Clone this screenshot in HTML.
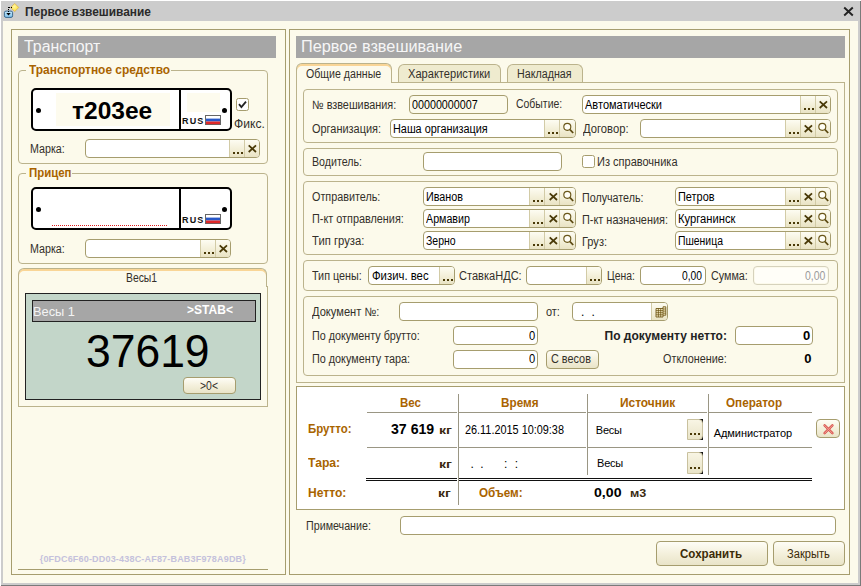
<!DOCTYPE html>
<html lang="ru"><head><meta charset="utf-8"><title>Первое взвешивание</title>
<style>
html,body{margin:0;padding:0}
body{width:861px;height:586px;background:#fff;position:relative;overflow:hidden;font-family:"Liberation Sans",sans-serif;font-size:12px}
div,span.t,span.fb,i.dots{position:absolute;box-sizing:border-box}
.t{white-space:nowrap;line-height:1;color:#2a2a2a;transform-origin:0 0}
.b{font-weight:bold}
.br{color:#a96300}
.br2{color:#a86400}
.gt{}
.lb{color:#33302a}
.in{color:#000}
.hd{font-size:16px;color:#f6f6f6}
.pnl{border:1px solid #a69d6e}
.grp{border:1px solid #bbb38c;border-radius:4px}
.fld{border:1px solid #a69d6e;border-radius:4px;background:#fff;overflow:hidden}
.fld.ro{background:#fcfaeb}
.fld.dis{background:#fffef8;border-color:#d6d2bc;box-shadow:inset 0 0 0 1px #fcfaeb}
.fb{top:0;bottom:0;width:16px;border-left:1px solid #d2cba6;background:linear-gradient(#fdfcf2,#f3efd8 55%,#e9e3c4)}
.ic{position:absolute;left:0.6px;top:0;width:15px;height:16px}
i.dots{left:3px;top:12px;width:10px;height:2.2px;background:linear-gradient(90deg,#4a3a08 0 2px,transparent 2px 4px,#4a3a08 4px 6px,transparent 6px 8px,#4a3a08 8px 10px)}
.btn{border:1px solid #a69d6e;border-radius:4px;background:linear-gradient(#fefdf6,#f4f0dc 50%,#e9e4c8)}
.cbtn{background:linear-gradient(90deg,transparent 12px,#111 12px)}
.cin{left:0;top:0;right:0;bottom:0;border:1px solid #c9c19e;border-radius:0 4px 4px 0;background:linear-gradient(#f8f5e4,#e9e4c8)}
.tab{border:1px solid #bbb38c;border-bottom:none;border-radius:6px 6px 0 0}
.tab.act{background:#fcfaeb;box-shadow:inset 0 2px 0 #f9d596}
.tab.ina{background:#efebcf}
.plate{border:2px solid #000;border-radius:5px;background:#fff}
</style></head>
<body>
<div style="left:1px;top:1px;width:859px;height:584px;background:#cccccc"></div>
<div style="left:860px;top:1px;width:1px;height:585px;background:#7a7a7a"></div>
<div style="left:1px;top:585px;width:860px;height:1px;background:#7a7a7a"></div>
<div style="left:3px;top:21px;width:855px;height:562px;background:#fcfaeb"></div>
<svg style="position:absolute;left:3px;top:1px" width="20" height="20" viewBox="0 0 20 20">
<defs><radialGradient id="dg" cx="0.45" cy="0.4" r="0.6"><stop offset="0" stop-color="#fff6a8"/><stop offset="1" stop-color="#ffdc28"/></radialGradient><linearGradient id="bl" x1="0" y1="0" x2="0" y2="1"><stop offset="0" stop-color="#c4e8fb"/><stop offset="1" stop-color="#7fc0ea"/></linearGradient></defs>
<rect x="1.4" y="10.1" width="8.2" height="6.3" rx="1.6" fill="url(#bl)" stroke="#2f5f86" stroke-width="0.9"/>
<path d="M11.7 2.4 L15.8 6.5 L11.7 10.6 L7.6 6.5 Z" fill="url(#dg)" stroke="#d9b25a" stroke-width="0.8"/>
<path d="M5.5 6 V12" stroke="#000" stroke-width="1" stroke-dasharray="1 1" fill="none"/>
<path d="M6 6.5 H9" stroke="#000" stroke-width="1" stroke-dasharray="1 1" fill="none"/>
<path d="M3.3 12 H7.7 L5.5 14.4 Z" fill="#000"/>
</svg>
<svg style="position:absolute;left:842px;top:5px" width="13" height="13" viewBox="0 0 13 13"><path d="M2.2 2.5 L10.8 10.5 M10.8 2.5 L2.2 10.5" stroke="#222" stroke-width="1.9" fill="none"/></svg>
<div class="pnl" style="left:11px;top:29px;width:275px;height:546px;"></div>
<div class="pnl" style="left:289px;top:29px;width:561px;height:546px;"></div>
<div style="left:18px;top:36px;width:258px;height:22px;background:#a6a6a6"></div>
<div style="left:296px;top:36px;width:549px;height:22px;background:#a6a6a6"></div>
<div class="grp" style="left:18px;top:70px;width:250px;height:94px;"></div>
<div style="left:26.2px;top:68px;width:145.3px;height:5px;background:#fcfaeb"></div>
<div class="plate" style="left:31px;top:88px;width:201px;height:43px;"></div>
<div style="left:178.5px;top:88px;width:2px;height:43px;background:#000"></div>
<div style="left:36px;top:108px;width:5px;height:5px;background:#000;border-radius:50%"></div>
<div style="left:222px;top:108px;width:5px;height:5px;background:#000;border-radius:50%"></div>
<div style="left:56px;top:93px;width:114px;height:33px;background:#fdfbee"></div>
<div style="left:187px;top:93px;width:33px;height:19px;background:#fdfbee"></div>
<svg style="position:absolute;left:205px;top:115px" width="16" height="10" viewBox="0 0 16 10"><rect x="0.5" y="0.5" width="15" height="9" fill="#fff" stroke="#666" stroke-width="1"/><rect x="1" y="3.6" width="14" height="2.9" fill="#2858c8"/><rect x="1" y="6.5" width="14" height="2.7" fill="#e02828"/></svg>
<svg style="position:absolute;left:236px;top:98px" width="13" height="13" viewBox="0 0 13 13"><rect x="0.5" y="0.5" width="12" height="12" rx="2" fill="#fff" stroke="#a69d6e"/><path d="M3 6.2 L5.4 9 L10 3.6" stroke="#222" stroke-width="1.8" fill="none"/></svg>
<div class="fld" style="left:85px;top:139px;width:175px;height:18.6px;"><span class="fb" style="left:142.7px"><i class="dots"></i></span><span class="fb" style="left:157.7px"><svg class="ic" viewBox="0 0 15 16"><path d="M3.7 5.4 L11 12 M11 5.4 L3.7 12" stroke="#4a3a08" stroke-width="1.75" fill="none"/></svg></span></div>
<div class="grp" style="left:18px;top:173px;width:250px;height:91px;"></div>
<div style="left:26.2px;top:171px;width:46.3px;height:5px;background:#fcfaeb"></div>
<div class="plate" style="left:31px;top:187px;width:201px;height:43px;"></div>
<div style="left:178.5px;top:187px;width:2px;height:43px;background:#000"></div>
<div style="left:36px;top:207px;width:5px;height:5px;background:#000;border-radius:50%"></div>
<div style="left:222px;top:207px;width:5px;height:5px;background:#000;border-radius:50%"></div>
<div style="left:52px;top:224.5px;width:115px;height:0px;border-top:1px dotted #e02020"></div>
<svg style="position:absolute;left:205px;top:214px" width="16" height="10" viewBox="0 0 16 10"><rect x="0.5" y="0.5" width="15" height="9" fill="#fff" stroke="#666" stroke-width="1"/><rect x="1" y="3.6" width="14" height="2.9" fill="#2858c8"/><rect x="1" y="6.5" width="14" height="2.7" fill="#e02828"/></svg>
<div class="fld" style="left:85px;top:239px;width:146px;height:18.6px;"><span class="fb" style="left:113.7px"><i class="dots"></i></span><span class="fb" style="left:128.7px"><svg class="ic" viewBox="0 0 15 16"><path d="M3.7 5.4 L11 12 M11 5.4 L3.7 12" stroke="#4a3a08" stroke-width="1.75" fill="none"/></svg></span></div>
<div class="tab act" style="left:18px;top:268px;width:249px;height:19px"></div>
<div style="left:18px;top:286px;width:250px;height:121px;border:1px solid #bbb38c;border-top:none"></div>
<div style="left:25px;top:293px;width:236px;height:107px;background:#c3d6c9;border:1px solid #222"></div>
<div style="left:32px;top:300px;width:224px;height:22px;background:#a6a6a6;border:1px solid #222"></div>
<div class="btn" style="left:183px;top:377px;width:53px;height:17px;"></div>
<div style="left:18px;top:569px;width:250px;height:1px;background:#a69d6e"></div>
<div class="tab ina" style="left:398px;top:64px;width:103px;height:18px"></div>
<div class="tab ina" style="left:507px;top:64px;width:76px;height:18px"></div>
<div style="left:296px;top:82px;width:549px;height:301px;border:1px solid #bbb38c"></div>
<div class="tab act" style="left:296px;top:63px;width:96px;height:20px"></div>
<div class="grp" style="left:303px;top:89px;width:535px;height:53.5px;"></div>
<div class="fld ro" style="left:409px;top:95px;width:99px;height:18.6px;"></div>
<div class="fld" style="left:582px;top:95px;width:249px;height:18.6px;"><span class="fb" style="left:216.7px"><i class="dots"></i></span><span class="fb" style="left:231.7px"><svg class="ic" viewBox="0 0 15 16"><path d="M3.7 5.4 L11 12 M11 5.4 L3.7 12" stroke="#4a3a08" stroke-width="1.75" fill="none"/></svg></span></div>
<div class="fld" style="left:390px;top:119px;width:185.5px;height:18.6px;"><span class="fb" style="left:153.2px"><i class="dots"></i></span><span class="fb" style="left:168.2px"><svg class="ic" viewBox="0 0 15 16"><circle cx="6.3" cy="6.8" r="3.5" stroke="#6a571a" stroke-width="1.15" fill="#fffef6"/><path d="M9 9.6 L12.2 13" stroke="#5a4810" stroke-width="1.7" fill="none"/></svg></span></div>
<div class="fld" style="left:640px;top:119px;width:191px;height:18.6px;"><span class="fb" style="left:143.7px"><i class="dots"></i></span><span class="fb" style="left:158.7px"><svg class="ic" viewBox="0 0 15 16"><path d="M3.7 5.4 L11 12 M11 5.4 L3.7 12" stroke="#4a3a08" stroke-width="1.75" fill="none"/></svg></span><span class="fb" style="left:173.7px"><svg class="ic" viewBox="0 0 15 16"><circle cx="6.3" cy="6.8" r="3.5" stroke="#6a571a" stroke-width="1.15" fill="#fffef6"/><path d="M9 9.6 L12.2 13" stroke="#5a4810" stroke-width="1.7" fill="none"/></svg></span></div>
<div class="grp" style="left:303px;top:147.5px;width:535px;height:28.5px;"></div>
<div class="fld" style="left:423px;top:152px;width:138.5px;height:18.6px;"></div>
<svg style="position:absolute;left:582px;top:155px" width="13" height="13" viewBox="0 0 13 13"><rect x="0.5" y="0.5" width="12" height="12" rx="2" fill="#fff" stroke="#a69d6e"/></svg>
<div class="grp" style="left:303px;top:181px;width:535px;height:74px;"></div>
<div class="fld" style="left:423px;top:187px;width:152.5px;height:18.6px;"><span class="fb" style="left:105.2px"><i class="dots"></i></span><span class="fb" style="left:120.2px"><svg class="ic" viewBox="0 0 15 16"><path d="M3.7 5.4 L11 12 M11 5.4 L3.7 12" stroke="#4a3a08" stroke-width="1.75" fill="none"/></svg></span><span class="fb" style="left:135.2px"><svg class="ic" viewBox="0 0 15 16"><circle cx="6.3" cy="6.8" r="3.5" stroke="#6a571a" stroke-width="1.15" fill="#fffef6"/><path d="M9 9.6 L12.2 13" stroke="#5a4810" stroke-width="1.7" fill="none"/></svg></span></div>
<div class="fld" style="left:675px;top:187px;width:156px;height:18.6px;"><span class="fb" style="left:108.7px"><i class="dots"></i></span><span class="fb" style="left:123.7px"><svg class="ic" viewBox="0 0 15 16"><path d="M3.7 5.4 L11 12 M11 5.4 L3.7 12" stroke="#4a3a08" stroke-width="1.75" fill="none"/></svg></span><span class="fb" style="left:138.7px"><svg class="ic" viewBox="0 0 15 16"><circle cx="6.3" cy="6.8" r="3.5" stroke="#6a571a" stroke-width="1.15" fill="#fffef6"/><path d="M9 9.6 L12.2 13" stroke="#5a4810" stroke-width="1.7" fill="none"/></svg></span></div>
<div class="fld" style="left:423px;top:209px;width:152.5px;height:18.6px;"><span class="fb" style="left:105.2px"><i class="dots"></i></span><span class="fb" style="left:120.2px"><svg class="ic" viewBox="0 0 15 16"><path d="M3.7 5.4 L11 12 M11 5.4 L3.7 12" stroke="#4a3a08" stroke-width="1.75" fill="none"/></svg></span><span class="fb" style="left:135.2px"><svg class="ic" viewBox="0 0 15 16"><circle cx="6.3" cy="6.8" r="3.5" stroke="#6a571a" stroke-width="1.15" fill="#fffef6"/><path d="M9 9.6 L12.2 13" stroke="#5a4810" stroke-width="1.7" fill="none"/></svg></span></div>
<div class="fld" style="left:675px;top:209px;width:156px;height:18.6px;"><span class="fb" style="left:108.7px"><i class="dots"></i></span><span class="fb" style="left:123.7px"><svg class="ic" viewBox="0 0 15 16"><path d="M3.7 5.4 L11 12 M11 5.4 L3.7 12" stroke="#4a3a08" stroke-width="1.75" fill="none"/></svg></span><span class="fb" style="left:138.7px"><svg class="ic" viewBox="0 0 15 16"><circle cx="6.3" cy="6.8" r="3.5" stroke="#6a571a" stroke-width="1.15" fill="#fffef6"/><path d="M9 9.6 L12.2 13" stroke="#5a4810" stroke-width="1.7" fill="none"/></svg></span></div>
<div class="fld" style="left:423px;top:231px;width:152.5px;height:18.6px;"><span class="fb" style="left:105.2px"><i class="dots"></i></span><span class="fb" style="left:120.2px"><svg class="ic" viewBox="0 0 15 16"><path d="M3.7 5.4 L11 12 M11 5.4 L3.7 12" stroke="#4a3a08" stroke-width="1.75" fill="none"/></svg></span><span class="fb" style="left:135.2px"><svg class="ic" viewBox="0 0 15 16"><circle cx="6.3" cy="6.8" r="3.5" stroke="#6a571a" stroke-width="1.15" fill="#fffef6"/><path d="M9 9.6 L12.2 13" stroke="#5a4810" stroke-width="1.7" fill="none"/></svg></span></div>
<div class="fld" style="left:675px;top:231px;width:156px;height:18.6px;"><span class="fb" style="left:108.7px"><i class="dots"></i></span><span class="fb" style="left:123.7px"><svg class="ic" viewBox="0 0 15 16"><path d="M3.7 5.4 L11 12 M11 5.4 L3.7 12" stroke="#4a3a08" stroke-width="1.75" fill="none"/></svg></span><span class="fb" style="left:138.7px"><svg class="ic" viewBox="0 0 15 16"><circle cx="6.3" cy="6.8" r="3.5" stroke="#6a571a" stroke-width="1.15" fill="#fffef6"/><path d="M9 9.6 L12.2 13" stroke="#5a4810" stroke-width="1.7" fill="none"/></svg></span></div>
<div class="grp" style="left:303px;top:260px;width:535px;height:31px;"></div>
<div class="fld" style="left:368px;top:266px;width:87px;height:18.6px;"><span class="fb" style="left:69.7px"><i class="dots"></i></span></div>
<div class="fld" style="left:526px;top:266px;width:76px;height:18.6px;"><span class="fb" style="left:58.7px"><i class="dots"></i></span></div>
<div class="fld" style="left:640px;top:266px;width:66px;height:18.6px;"></div>
<div class="fld dis" style="left:753px;top:266px;width:76px;height:18.6px;"></div>
<div class="grp" style="left:303px;top:296px;width:535px;height:80px;"></div>
<div class="fld" style="left:399px;top:302px;width:139px;height:18.6px;"></div>
<div class="fld" style="left:572px;top:302px;width:95.5px;height:18.6px;"><span class="fb" style="left:78.2px"><svg class="ic" viewBox="0 0 15 16"><path d="M3 5.5 H10 V3.8 H12.8 V12.2 H10 V14 H3 Z" fill="#f6ecc4" stroke="#6a5210" stroke-width="0.85"/><path d="M3 7.6 H10 M3 9.7 H10 M3 11.8 H10 M5.4 5.5 V14 M7.7 5.5 V14 M10 5.5 V12.2 M10 6 H12.8 M10 8.1 H12.8 M10 10.2 H12.8" stroke="#6a5210" stroke-width="0.75" fill="none"/></svg></span></div>
<div class="fld" style="left:453px;top:326px;width:85px;height:18.6px;"></div>
<div class="fld" style="left:735px;top:326px;width:78px;height:18.6px;"></div>
<div class="fld" style="left:453px;top:350px;width:85px;height:18.6px;"></div>
<div class="btn" style="left:546px;top:350px;width:52.5px;height:19px;"></div>
<div style="left:296px;top:386px;width:549px;height:124px;background:#fff;border:1px solid #a69d6e"></div>
<div style="left:458px;top:394px;width:1px;height:111px;background:#9a9684"></div>
<div style="left:587px;top:394px;width:1px;height:81px;background:#9a9684"></div>
<div style="left:708px;top:394px;width:1px;height:81px;background:#9a9684"></div>
<div style="left:367px;top:412px;width:90px;height:1px;background:#9a9684"></div>
<div style="left:459px;top:412px;width:127px;height:1px;background:#9a9684"></div>
<div style="left:588px;top:412px;width:119px;height:1px;background:#9a9684"></div>
<div style="left:709px;top:412px;width:103px;height:1px;background:#9a9684"></div>
<div style="left:367px;top:447px;width:90px;height:1px;background:#9a9684"></div>
<div style="left:459px;top:447px;width:127px;height:1px;background:#9a9684"></div>
<div style="left:588px;top:447px;width:119px;height:1px;background:#9a9684"></div>
<div style="left:709px;top:447px;width:103px;height:1px;background:#9a9684"></div>
<div style="left:366px;top:478px;width:91px;height:1px;background:#111"></div>
<div style="left:459px;top:478px;width:353px;height:1px;background:#111"></div>
<div style="left:366px;top:480px;width:91px;height:1px;background:#111"></div>
<div style="left:459px;top:480px;width:353px;height:1px;background:#111"></div>
<div class="cbtn" style="left:687px;top:419px;width:16px;height:21px;"><div class="cin"></div><i class="dots" style="left:3px;top:13.6px"></i></div>
<div class="cbtn" style="left:687px;top:452px;width:16px;height:22px;"><div class="cin"></div><i class="dots" style="left:3px;top:15.2px"></i></div>
<div class="btn" style="left:816px;top:419px;width:24px;height:19px;"><svg style="position:absolute;left:5px;top:2.5px" width="13" height="13" viewBox="0 0 13 13"><path d="M2.6 2.4 L10.4 10.2 M10.4 2.4 L2.6 10.2" stroke="#d9564f" stroke-width="2.5" stroke-linecap="round" fill="none"/><path d="M2.6 2.4 L10.4 10.2 M10.4 2.4 L2.6 10.2" stroke="#f2a09a" stroke-width="1" stroke-linecap="round" fill="none"/></svg></div>
<div class="fld" style="left:400px;top:516px;width:436px;height:18.6px;"></div>
<div class="btn big" style="left:656px;top:541px;width:112px;height:25px;"></div>
<div class="btn big" style="left:773px;top:541px;width:72px;height:25px;"></div>
<span class="t b" style="left:24.7px;top:6.0px;transform:scaleX(0.992);font-size:12px;color:#2a2a2a">Первое взвешивание</span>
<span class="t hd" style="left:23.7px;top:39.2px;transform:scaleX(0.992);">Транспорт</span>
<span class="t hd" style="left:300.7px;top:39.4px;transform:scaleX(1.018);">Первое взвешивание</span>
<span class="t b br gt" style="left:28.6px;top:64.0px;transform:scaleX(0.992);">Транспортное средство</span>
<span class="t b" style="left:182.0px;top:117.4px;letter-spacing:1.14px;font-size:9px;color:#111">RUS</span>
<span class="t b" style="left:72.0px;top:99.5px;transform:scaleX(1.067);font-size:23px;color:#000">т203ее</span>
<span class="t lb" style="left:234.3px;top:118.0px;transform:scaleX(1.008);">Фикс.</span>
<span class="t lb" style="left:30.2px;top:142.8px;transform:scaleX(0.892);">Марка:</span>
<span class="t b br gt" style="left:28.6px;top:166.9px;transform:scaleX(0.952);">Прицеп</span>
<span class="t b" style="left:182.0px;top:216.4px;letter-spacing:1.14px;font-size:9px;color:#111">RUS</span>
<span class="t lb" style="left:30.2px;top:243.1px;transform:scaleX(0.892);">Марка:</span>
<span class="t lb" style="left:126.0px;top:271.8px;transform:scaleX(0.864);">Весы1</span>
<span class="t " style="left:32.8px;top:305.0px;transform:scaleX(0.984);font-size:13px;color:#f4f4f4">Весы 1</span>
<span class="t b" style="left:187.1px;top:303.7px;color:#fff">&gt;STAB&lt;</span>
<span class="t " style="left:85.6px;top:328.0px;transform:scaleX(0.966);font-size:46px;color:#000">37619</span>
<span class="t lb" style="left:199.7px;top:379.7px;transform:scaleX(0.869);">&gt;0&lt;</span>
<span class="t b" style="left:39.7px;top:555.2px;letter-spacing:0.19px;font-size:9px;color:#c4c1dc">{0FDC6F60-DD03-438C-AF87-BAB3F978A9DB}</span>
<span class="t lb" style="left:305.5px;top:67.7px;transform:scaleX(0.884);">Общие данные</span>
<span class="t lb" style="left:407.6px;top:67.8px;transform:scaleX(0.924);">Характеристики</span>
<span class="t lb" style="left:517.1px;top:67.8px;transform:scaleX(0.892);">Накладная</span>
<span class="t lb" style="left:311.9px;top:98.5px;transform:scaleX(0.903);">№ взвешивания:</span>
<span class="t in" style="left:411.9px;top:98.5px;transform:scaleX(0.895);">00000000007</span>
<span class="t lb" style="left:515.7px;top:98.2px;transform:scaleX(0.871);">Событие:</span>
<span class="t in" style="left:585.1px;top:98.5px;transform:scaleX(0.918);">Автоматически</span>
<span class="t lb" style="left:311.7px;top:122.7px;transform:scaleX(0.911);">Организация:</span>
<span class="t in" style="left:393.3px;top:122.7px;transform:scaleX(0.905);">Наша организация</span>
<span class="t lb" style="left:582.5px;top:122.7px;transform:scaleX(0.937);">Договор:</span>
<span class="t lb" style="left:312.0px;top:156.0px;transform:scaleX(0.887);">Водитель:</span>
<span class="t lb" style="left:597.2px;top:156.0px;transform:scaleX(0.918);">Из справочника</span>
<span class="t lb" style="left:312.0px;top:190.7px;transform:scaleX(0.899);">Отправитель:</span>
<span class="t in" style="left:426.0px;top:190.7px;transform:scaleX(0.898);">Иванов</span>
<span class="t lb" style="left:582.2px;top:191.6px;transform:scaleX(0.892);">Получатель:</span>
<span class="t in" style="left:678.2px;top:190.7px;transform:scaleX(0.910);">Петров</span>
<span class="t lb" style="left:312.0px;top:212.7px;transform:scaleX(0.904);">П-кт отправления:</span>
<span class="t in" style="left:426.0px;top:212.7px;transform:scaleX(0.891);">Армавир</span>
<span class="t lb" style="left:582.2px;top:213.6px;transform:scaleX(0.908);">П-кт назначения:</span>
<span class="t in" style="left:678.2px;top:212.7px;transform:scaleX(0.934);">Курганинск</span>
<span class="t lb" style="left:312.0px;top:234.7px;transform:scaleX(0.938);">Тип груза:</span>
<span class="t in" style="left:426.0px;top:234.7px;transform:scaleX(0.876);">Зерно</span>
<span class="t lb" style="left:582.2px;top:235.6px;transform:scaleX(0.919);">Груз:</span>
<span class="t in" style="left:678.2px;top:234.7px;transform:scaleX(0.867);">Пшеница</span>
<span class="t lb" style="left:312.3px;top:269.6px;transform:scaleX(0.898);">Тип цены:</span>
<span class="t in" style="left:371.6px;top:269.6px;transform:scaleX(0.945);">Физич. вес</span>
<span class="t lb" style="left:459.3px;top:269.6px;transform:scaleX(0.921);">СтавкаНДС:</span>
<span class="t lb" style="left:607.2px;top:269.6px;transform:scaleX(0.864);">Цена:</span>
<span class="t in" style="left:682.1px;top:269.6px;transform:scaleX(0.856);">0,00</span>
<span class="t lb" style="left:710.5px;top:269.6px;transform:scaleX(0.897);">Сумма:</span>
<span class="t in" style="left:805.3px;top:269.6px;transform:scaleX(0.873);color:#9a9a9a">0,00</span>
<span class="t lb" style="left:312.0px;top:306.1px;transform:scaleX(0.926);">Документ №:</span>
<span class="t lb" style="left:545.6px;top:306.1px;transform:scaleX(0.911);">от:</span>
<span class="t in" style="left:581.1px;top:306.1px;letter-spacing:1.89px;">. .</span>
<span class="t lb" style="left:312.3px;top:329.8px;transform:scaleX(0.895);">По документу брутто:</span>
<span class="t in" style="left:528.7px;top:329.8px;transform:scaleX(0.930);">0</span>
<span class="t b" style="left:604.5px;top:329.8px;color:#222">По документу нетто:</span>
<span class="t b" style="left:803.0px;top:329.0px;font-size:13px;color:#000">0</span>
<span class="t lb" style="left:312.3px;top:353.3px;transform:scaleX(0.901);">По документу тара:</span>
<span class="t in" style="left:528.7px;top:353.3px;transform:scaleX(0.930);">0</span>
<span class="t lb" style="left:551.1px;top:353.3px;transform:scaleX(0.905);">С весов</span>
<span class="t lb" style="left:663.4px;top:353.3px;transform:scaleX(0.903);">Отклонение:</span>
<span class="t b" style="left:804.3px;top:351.9px;font-size:13px;color:#000">0</span>
<span class="t b br" style="left:400.3px;top:397.0px;transform:scaleX(0.956);">Вес</span>
<span class="t b br" style="left:501.1px;top:397.0px;transform:scaleX(0.977);">Время</span>
<span class="t b br" style="left:620.2px;top:397.0px;transform:scaleX(0.992);">Источник</span>
<span class="t b br" style="left:726.0px;top:397.0px;transform:scaleX(0.973);">Оператор</span>
<span class="t b br2" style="left:308.0px;top:422.8px;transform:scaleX(0.955);">Брутто:</span>
<span class="t b" style="left:391.1px;top:421.9px;transform:scaleX(1.009);font-size:14px;color:#000">37 619</span>
<span class="t b" style="left:439.3px;top:424.5px;transform:scaleX(1.288);font-size:11px;color:#3a2a10">кг</span>
<span class="t in" style="left:464.5px;top:424.0px;transform:scaleX(0.906);">26.11.2015 10:09:38</span>
<span class="t in" style="left:595.8px;top:424.9px;letter-spacing:-0.23px;font-size:11px">Весы</span>
<span class="t in" style="left:713.8px;top:428.0px;letter-spacing:-0.09px;font-size:11px">Администратор</span>
<span class="t b br2" style="left:308.0px;top:456.7px;transform:scaleX(1.015);">Тара:</span>
<span class="t b" style="left:439.3px;top:459.3px;transform:scaleX(1.288);font-size:11px;color:#3a2a10">кг</span>
<span class="t in" style="left:470.5px;top:458.4px;letter-spacing:1.59px;">. .</span>
<span class="t in" style="left:503.9px;top:458.4px;letter-spacing:2.09px;">: :</span>
<span class="t in" style="left:597.1px;top:457.5px;letter-spacing:-0.29px;font-size:11px">Весы</span>
<span class="t b br2" style="left:308.0px;top:486.9px;transform:scaleX(1.005);">Нетто:</span>
<span class="t b" style="left:437.5px;top:488.1px;transform:scaleX(1.268);font-size:11px;color:#3a2a10">кг</span>
<span class="t b br" style="left:478.8px;top:487.2px;transform:scaleX(0.975);">Объем:</span>
<span class="t b" style="left:594.1px;top:486.1px;transform:scaleX(1.086);font-size:13px;color:#000">0,00</span>
<span class="t b" style="left:629.5px;top:487.8px;transform:scaleX(1.143);font-size:11px;color:#3a2a10">м3</span>
<span class="t lb" style="left:306.3px;top:519.8px;transform:scaleX(0.892);">Примечание:</span>
<span class="t b" style="left:680.3px;top:548.0px;transform:scaleX(0.965);color:#3c2c08">Сохранить</span>
<span class="t lb" style="left:787.0px;top:548.0px;transform:scaleX(0.926);color:#3c2c08">Закрыть</span>
</body></html>
